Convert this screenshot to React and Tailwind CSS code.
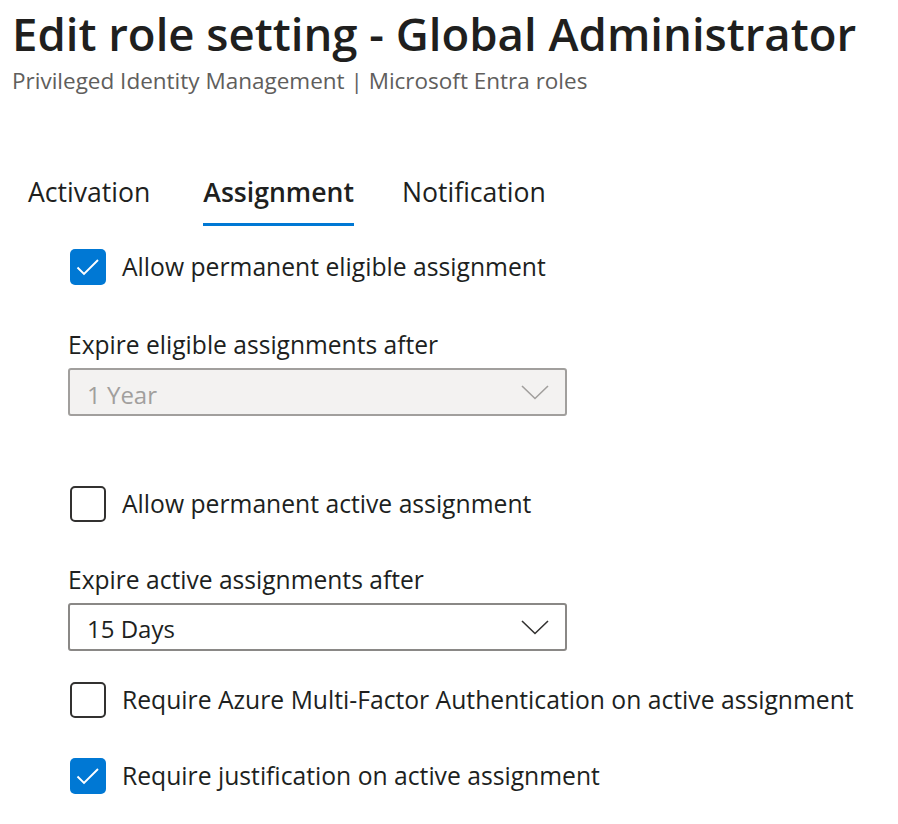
import { useState } from "react";

const font = { fontFamily: '"Segoe UI", "Open Sans", "Noto Sans", sans-serif' };

function Checkbox({ checked, label }) {
  return (
    <label className="flex items-center gap-4 cursor-pointer">
      <span
        className={
          checked
            ? "w-9 h-9 rounded-[5px] bg-[#0078d4] shrink-0"
            : "w-9 h-9 rounded-[5px] border-2 border-[#323130] bg-white shrink-0"
        }
      >
        {checked && (
          <svg width="36" height="36" viewBox="0 0 36 36" fill="none">
            <path d="M7.5 18.5 L14 25 L28 11" stroke="white" strokeWidth="1.9" />
          </svg>
        )}
      </span>
      <span className="text-[24.7px] text-[#201f1e] leading-none">{label}</span>
    </label>
  );
}

function Dropdown({ value, disabled }) {
  return (
    <div
      className={
        disabled
          ? "w-[499px] h-[48px] rounded-[3px] border-2 border-[#a19f9d] bg-[#f3f2f1] flex items-center justify-between pl-[17px] pr-[16px]"
          : "w-[499px] h-[48px] rounded-[3px] border-2 border-[#8a8886] bg-white flex items-center justify-between pl-[17px] pr-[16px]"
      }
    >
      <span
        className={
          disabled
            ? "text-[24px] text-[#a19f9d] pt-[5px]"
            : "text-[24px] text-[#201f1e] pt-[4px]"
        }
      >
        {value}
      </span>
      <svg width="28" height="15" viewBox="0 0 28 15" fill="none">
        <path
          d="M1 1 L14 13.5 L27 1"
          stroke={disabled ? "#a19f9d" : "#323130"}
          strokeWidth="1.6"
        />
      </svg>
    </div>
  );
}

export default function App() {
  const [tab] = useState("Assignment");
  const tabs = [
    { name: "Activation", cls: "flex flex-col" },
    { name: "Assignment", cls: "flex flex-col ml-[53px]" },
    { name: "Notification", cls: "flex flex-col ml-[48px]" },
  ];

  return (
    <div className="w-[898px] h-[824px] bg-white overflow-hidden" style={font}>
      <div className="pl-3 pt-[4px]">
        <h1 className="text-[45.5px] font-semibold text-[#201f1e] leading-[58px]">
          Edit role setting - Global Administrator
        </h1>
        <p className="text-[22.5px] text-[#605e5c] leading-[30px] mt-[4px]">
          Privileged Identity Management | Microsoft Entra roles
        </p>
      </div>

      {/* tabs */}
      <div className="flex pl-[28px] mt-[76px]">
        {tabs.map((t) => (
          <div key={t.name} className={t.cls}>
            <span
              className={
                t.name === tab
                  ? "text-[26.6px] font-semibold text-[#201f1e] leading-[40px]"
                  : "text-[26.6px] text-[#201f1e] leading-[40px]"
              }
            >
              {t.name}
            </span>
            <span
              className={
                t.name === tab ? "h-[3px] bg-[#0078d4] mt-[11px]" : "h-[3px] mt-[11px]"
              }
            />
          </div>
        ))}
      </div>

      <div className="pl-[68px] mt-[23px]">
        <div className="pl-[2px]">
          <Checkbox checked label="Allow permanent eligible assignment" />
        </div>

        <p className="text-[24.6px] text-[#201f1e] leading-[30px] mt-[45px]">
          Expire eligible assignments after
        </p>
        <div className="mt-[8px]">
          <Dropdown value="1 Year" disabled />
        </div>

        <div className="pl-[2px] mt-[70px]">
          <Checkbox label="Allow permanent active assignment" />
        </div>

        <p className="text-[24.6px] text-[#201f1e] leading-[30px] mt-[43px]">
          Expire active assignments after
        </p>
        <div className="mt-[8px]">
          <Dropdown value="15 Days" />
        </div>

        <div className="pl-[2px] mt-[31px]">
          <Checkbox label="Require Azure Multi-Factor Authentication on active assignment" />
        </div>

        <div className="pl-[2px] mt-[40px]">
          <Checkbox checked label="Require justification on active assignment" />
        </div>
      </div>
    </div>
  );
}
